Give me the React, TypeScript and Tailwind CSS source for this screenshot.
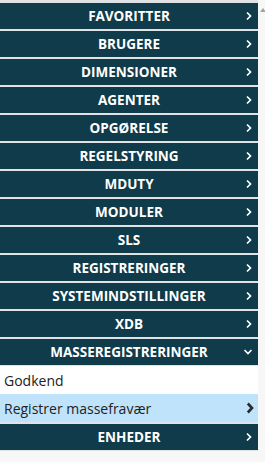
import React from "react";

const menu = [
  "FAVORITTER",
  "BRUGERE",
  "DIMENSIONER",
  "AGENTER",
  "OPGØRELSE",
  "REGELSTYRING",
  "MDUTY",
  "MODULER",
  "SLS",
  "REGISTRERINGER",
  "SYSTEMINDSTILLINGER",
  "XDB",
];

function ChevronRight({ className }: { className?: string }) {
  return (
    <svg width="8" height="10" viewBox="0 0 8 10" className={className}>
      <polyline points="2,1.5 5.5,5 2,8.5" fill="none" stroke="currentColor" strokeWidth="1.7" />
    </svg>
  );
}

function ChevronDown() {
  return (
    <svg width="10" height="8" viewBox="0 0 10 8">
      <polyline points="1.5,2 5,5.5 8.5,2" fill="none" stroke="currentColor" strokeWidth="1.6" />
    </svg>
  );
}

function Header({ label, open }: { label: string; open?: boolean }) {
  return (
    <div className="relative flex h-[26px] items-center justify-center bg-[#0f3b4a] text-white">
      <span className="text-[13.5px] font-bold">{label}</span>
      <span className="absolute right-[5px] top-0 flex h-full items-center">
        {open ? <ChevronDown /> : <ChevronRight />}
      </span>
    </div>
  );
}

export default function App() {
  return (
    <div className="flex h-[462px] w-[265px] bg-[#f7f7f7]" style={{ fontFamily: "'Open Sans', sans-serif" }}>
      <div className="flex w-[258px] flex-col self-start bg-[#dfe3e6] pb-[1px] pt-[3px]">
        <div className="flex flex-col gap-[2px]">
          {menu.map((m) => (
            <Header key={m} label={m} />
          ))}
          <Header label="MASSEREGISTRERINGER" open />
        </div>
        <div className="mt-[1px] flex h-[28px] items-center bg-white pl-[4px] text-[14px] text-[#222]">Godkend</div>
        <div className="relative flex h-[28px] items-center bg-[#bfe3fb] pl-[4px] text-[14px] text-[#222]">
          Registrer massefravær
          <span className="absolute right-[4px] top-0 flex h-full items-center text-[#2a2a2a]">
            <svg width="8" height="12" viewBox="0 0 8 12">
              <polyline points="1.8,1.5 6,6 1.8,10.5" fill="none" stroke="currentColor" strokeWidth="2.6" />
            </svg>
          </span>
        </div>
        <div className="mt-[2px]">
          <Header label="ENHEDER" />
        </div>
      </div>
      <div className="relative w-[7px] bg-[#f7f7f7]">
        <div className="absolute left-[2px] top-[8px] h-0 w-0 border-x-[3px] border-b-[4px] border-x-transparent border-b-[#a3a3a3]" />
      </div>
    </div>
  );
}
